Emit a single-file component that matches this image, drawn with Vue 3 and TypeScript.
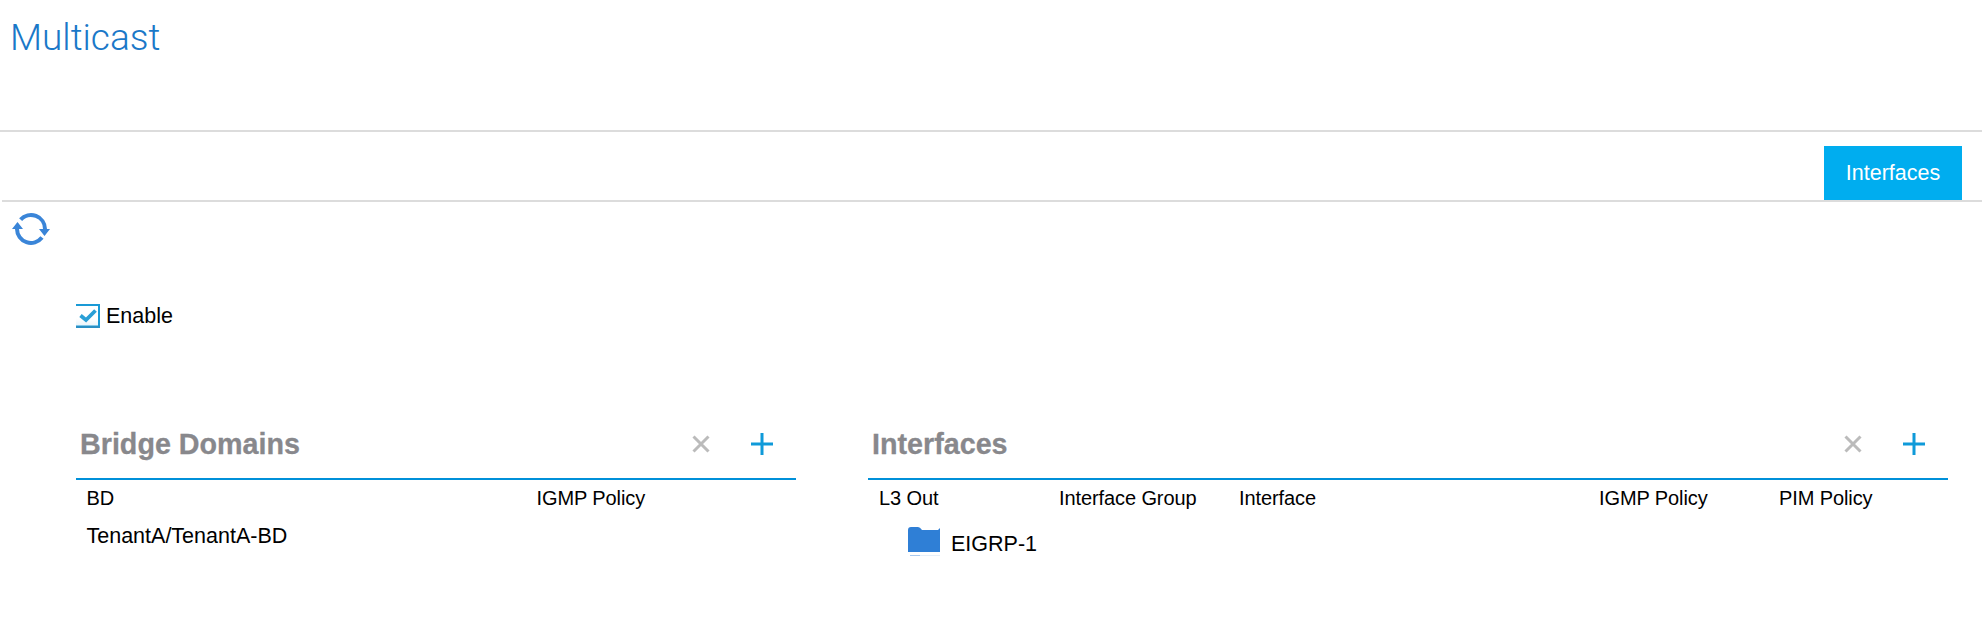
<script setup lang="ts">
const ifaceCols: string[] = ['L3 Out', 'Interface Group', 'Interface', 'IGMP Policy', 'PIM Policy']
</script>

<template>
  <div class="page">
    <header class="title-bar">
      <h1 class="title">Multicast</h1>
    </header>
    <nav class="tab-bar">
      <div class="tab">Interfaces</div>
    </nav>
    <div class="toolbar">
      <svg class="refresh" width="38" height="34" viewBox="0 0 38 34" fill="none">
        <path d="M8.600 6.700A14 14 0 0 1 33 16" stroke="#3a85d8" stroke-width="4" />
        <path d="M5 16A14 14 0 0 0 30 24.600" stroke="#3a85d8" stroke-width="4" />
        <path d="M0 16H11L5.500 9Z M38 16H27L32.500 23Z" fill="#3a85d8" />
      </svg>
    </div>
    <label class="enable">
      <span class="checkbox">
        <svg width="24" height="24" viewBox="0 0 24 24" fill="none">
          <path d="M0 1H23V22.500H0" stroke="#1a9ad6" stroke-width="2" />
          <path d="M0 23H24" stroke="#2a8fc4" stroke-width="2" />
          <path d="M4.500 11.500L10 16L19.500 6.500" stroke="#2a9fd6" stroke-width="3.800" />
        </svg>
      </span>
      <span>Enable</span>
    </label>
    <div class="panels">
      <section class="panel panel-bd">
        <div class="panel-head">
          <h2 class="panel-title">Bridge Domains</h2>
          <div class="actions">
            <svg width="18" height="18" viewBox="0 0 18 18"><path d="M1.500 1.500L16.500 16.500M16.500 1.500L1.500 16.500" stroke="#bbb" stroke-width="3" /></svg>
            <svg width="22" height="22" viewBox="0 0 22 22"><path d="M11 0V22M0 11H22" stroke="#0f9ad9" stroke-width="3" /></svg>
          </div>
        </div>
        <div class="table bd-table">
          <div class="cell head">BD</div>
          <div class="cell head">IGMP Policy</div>
          <div class="cell value">TenantA/TenantA-BD</div>
          <div class="cell value"></div>
        </div>
      </section>
      <section class="panel panel-if">
        <div class="panel-head">
          <h2 class="panel-title">Interfaces</h2>
          <div class="actions">
            <svg width="18" height="18" viewBox="0 0 18 18"><path d="M1.500 1.500L16.500 16.500M16.500 1.500L1.500 16.500" stroke="#bbb" stroke-width="3" /></svg>
            <svg width="22" height="22" viewBox="0 0 22 22"><path d="M11 0V22M0 11H22" stroke="#0f9ad9" stroke-width="3" /></svg>
          </div>
        </div>
        <div class="table if-table">
          <div v-for="c in ifaceCols" :key="c" class="cell head">{{ c }}</div>
        </div>
        <div class="tree-row">
          <svg class="folder" width="32" height="30" viewBox="0 0 32 30">
            <path d="M0 4Q0 1 3 1H10Q12 1 14 4H30L32 2V26H0Z" fill="#2f7fd6" />
            <rect x="2" y="29" width="10" height="1" fill="#a9c9ee" />
            <rect x="12" y="29" width="20" height="1" fill="#e6eff9" />
          </svg>
          <span class="tree-label">EIGRP-1</span>
        </div>
      </section>
    </div>
  </div>
</template>

<style scoped>
.page {
  width: 1982px;
  height: 626px;
  overflow: hidden;
  background: #fff;
  color: #000;
  font-family: "Liberation Sans", Arial, sans-serif;
  font-size: 21.500px;
}
.title-bar {
  height: 130px;
  border-bottom: 2px solid #dcdcdc;
}
.title {
  margin: 0;
  padding: 16px 0 0 10px;
  font-family: Roboto, "Liberation Sans", Arial, sans-serif;
  font-size: 37px;
  line-height: 44px;
  font-weight: 300;
  color: #1a78c8;
}
.tab-bar {
  display: flex;
  justify-content: flex-end;
  height: 70px;
  margin-left: 2px;
  padding: 14px 20px 0 0;
  box-sizing: border-box;
  border-bottom: 2px solid #dcdcdc;
}
.tab {
  width: 138px;
  height: 54px;
  background: #00adef;
  color: #fff;
  line-height: 54px;
  text-align: center;
}
.toolbar {
  height: 35px;
  padding: 11px 0 0 12px;
}
.refresh {
  display: block;
}
.enable {
  display: flex;
  align-items: center;
  gap: 6px;
  margin: 55px 0 0 76px;
  height: 26px;
}
.checkbox {
  display: block;
  width: 24px;
  height: 24px;
  background: linear-gradient(#fff 60%, #e4f1f9);
}
.checkbox svg {
  display: block;
}
.panels {
  display: flex;
  gap: 72px;
  margin: 87px 0 0 76px;
}
.panel-bd {
  width: 720px;
}
.panel-if {
  width: 1080px;
}
.panel-head {
  display: flex;
  align-items: center;
  justify-content: space-between;
  box-sizing: border-box;
  height: 64px;
  padding: 0 23px 6px 4px;
  border-bottom: 2px solid #0090d9;
}
.panel-title {
  margin: 0;
  font-size: 28.700px;
  line-height: 34px;
  font-weight: 700;
  color: #88888c;
  -webkit-text-stroke: 0.3px #88888c;
}
.actions {
  display: flex;
  align-items: center;
  gap: 41px;
}
.actions svg {
  display: block;
}
.table {
  display: grid;
  padding-left: 10.500px;
}
.bd-table {
  grid-template-columns: 450px 1fr;
}
.if-table {
  padding-left: 11px;
  grid-template-columns: 180px 180px 360px 180px 1fr;
}
.cell {
  line-height: 24px;
  white-space: nowrap;
}
.head {
  padding-top: 6px;
  font-size: 20px;
  letter-spacing: -0.100px;
}
.value {
  padding-top: 14px;
}
.tree-row {
  display: flex;
  align-items: flex-start;
  gap: 11px;
  height: 30px;
  margin: 16px 0 0 40px;
}
.folder {
  display: block;
  flex: none;
}
.tree-label {
  line-height: 26px;
  margin-top: 5px;
  white-space: nowrap;
}
</style>
